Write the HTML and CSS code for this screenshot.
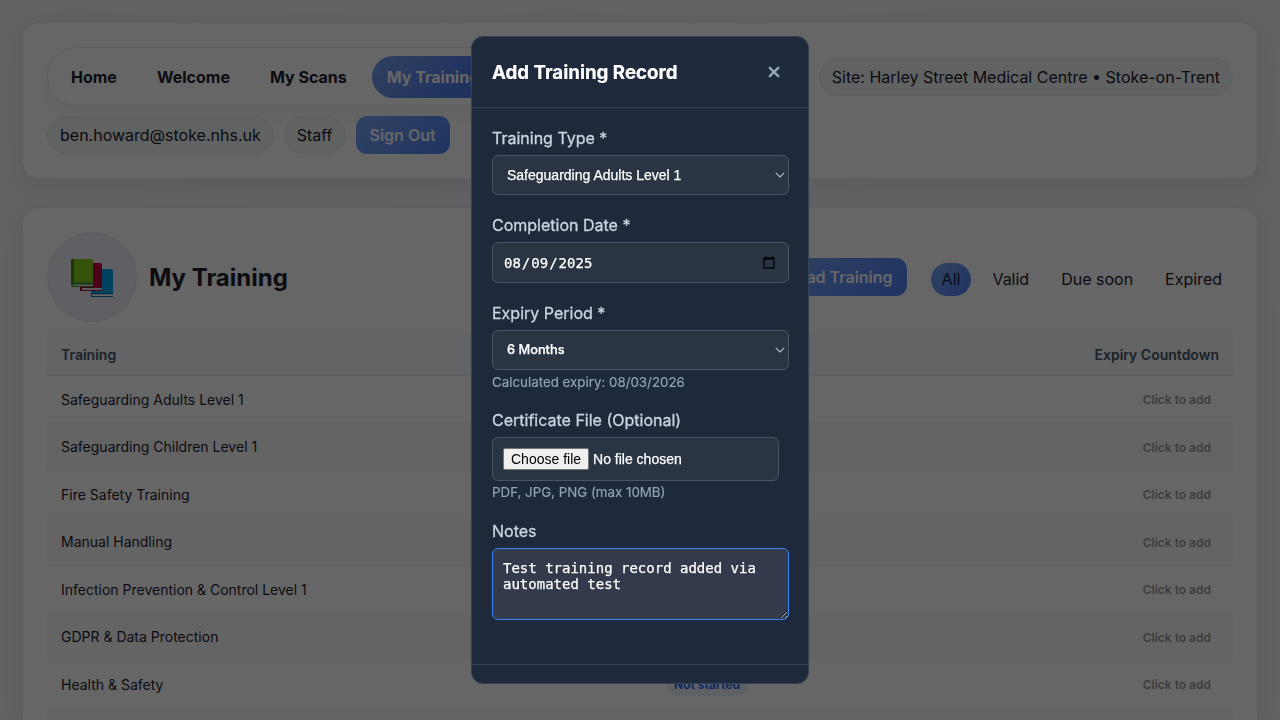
FILE: index.html
```html
<!DOCTYPE html>
<html lang="en-GB">
<head>
<meta charset="utf-8">
<title>My Training</title>
<link rel="stylesheet" href="styles.css">
</head>
<body>
<main class="page">
  <header class="card topbar">
    <nav class="nav">
      <a class="nav-link">Home</a>
      <a class="nav-link">Welcome</a>
      <a class="nav-link">My Scans</a>
      <a class="nav-link active">My Training</a>
    </nav>
    <span class="pill site">Site: Harley Street Medical Centre • Stoke-on-Trent</span>
    <span class="pill">ben.howard@stoke.nhs.uk</span>
    <span class="pill">Staff</span>
    <button class="btn signout">Sign Out</button>
  </header>

  <section class="card content">
    <div class="heading">
      <div class="badge">
        <svg width="44" height="42" viewBox="0 0 44 42">
          <path d="M21 11h20q2 0 2 2v25H21z" fill="#00a4ef"/>
          <path d="M21 35h22v4H21z" fill="#0072b5"/><path d="M22 36.300h21v1.700H22z" fill="#fff"/>
          <path d="M11 5h19q2 0 2 2v25H11z" fill="#c9003f"/>
          <path d="M10 29h22v4H10z" fill="#b00038"/><path d="M12 30h20v2H12z" fill="#e9dce4"/>
          <path d="M1 1h20.500q1.500 0 1.500 2v23H1z" fill="#84d01c"/>
          <path d="M1 1h3v25H1z" fill="#458b12"/>
          <path d="M1 26q0-1.500 2-1.500h20V29H3q-2 0-2-3z" fill="#398b37"/><path d="M3 26.500h20V28H3z" fill="#dce8e4"/>
        </svg>
      </div>
      <h1>My Training</h1>
      <button class="btn upload">Upload Training</button>
      <div class="filters">
        <span class="filter on">All</span>
        <span class="filter">Valid</span>
        <span class="filter">Due soon</span>
        <span class="filter">Expired</span>
      </div>
    </div>
    <table class="table">
      <thead><tr><th>Training</th><th class="mid"></th><th class="end">Expiry Countdown</th></tr></thead>
      <tbody>
        <tr><td>Safeguarding Adults Level 1</td><td class="mid"></td><td class="end"><span class="add">Click to add</span></td></tr>
        <tr><td>Safeguarding Children Level 1</td><td class="mid"></td><td class="end"><span class="add">Click to add</span></td></tr>
        <tr><td>Fire Safety Training</td><td class="mid"></td><td class="end"><span class="add">Click to add</span></td></tr>
        <tr><td>Manual Handling</td><td class="mid"></td><td class="end"><span class="add">Click to add</span></td></tr>
        <tr><td>Infection Prevention &amp; Control Level 1</td><td class="mid"></td><td class="end"><span class="add">Click to add</span></td></tr>
        <tr><td>GDPR &amp; Data Protection</td><td class="mid"></td><td class="end"><span class="add">Click to add</span></td></tr>
        <tr><td>Health &amp; Safety</td><td class="mid"><span class="status">Not started</span></td><td class="end"><span class="add">Click to add</span></td></tr>
        <tr><td></td><td></td><td></td></tr>
      </tbody>
    </table>
  </section>
</main>

<div class="overlay">
  <div class="modal">
    <div class="modal-head">
      <h2>Add Training Record</h2>
      <svg class="close" width="12" height="12" viewBox="0 0 12 12"><path d="M1.800 1.800l8.400 8.400M10.200 1.800L1.800 10.200" stroke="#94a3b8" stroke-width="2.500" stroke-linecap="round"/></svg>
    </div>
    <div class="modal-body">
      <div class="group">
        <label>Training Type *</label>
        <div class="control select"><span>Safeguarding Adults Level 1</span><svg width="10" height="6" viewBox="0 0 10 6"><path d="M.8.8L5 5 9.200.8" fill="none" stroke="#b6bec9" stroke-width="1.100"/></svg></div>
      </div>
      <div class="group">
        <label>Completion Date *</label>
        <div class="control date"><span class="digits"><span>08</span><span>/</span><span>09</span><span>/</span><span>2025</span></span><svg width="12" height="13" viewBox="0 0 12 13"><path d="M1 2.200h10v9.800H1z" fill="none" stroke="#05070a" stroke-width="1.400"/><path d="M.5 1.500h11v2.300H.5zM2.200.2h1.300v2H2.200zM8.500.2h1.300v2H8.500z" fill="#05070a"/></svg></div>
      </div>
      <div class="group">
        <label>Expiry Period *</label>
        <div class="control select"><span class="months">6 Months</span><svg width="10" height="6" viewBox="0 0 10 6"><path d="M.8.8L5 5 9.200.8" fill="none" stroke="#b6bec9" stroke-width="1.100"/></svg></div>
        <p class="hint calc">Calculated expiry: 08/03/2026</p>
      </div>
      <div class="group upload-group">
        <label>Certificate File (Optional)</label>
        <div class="control file"><span class="choose">Choose file</span><span>No file chosen</span></div>
        <p class="hint">PDF, JPG, PNG (max 10MB)</p>
      </div>
      <div class="group">
        <label>Notes</label>
        <textarea class="control notes">Test training record added via automated test</textarea>
      </div>
    </div>
    <div class="modal-foot"></div>
  </div>
</div>
</body>
</html>
```
FILE: styles.css
```css
* { box-sizing: border-box; }
html { height: 720px; overflow: hidden; }
body {
  margin: 0;
  height: 720px;
  overflow: hidden;
  font-family: Inter, sans-serif;
  font-size: 16px;
  line-height: 20px;
  color: #1c2130;
  background: radial-gradient(circle at 25% 0, #f7f3fa 0, transparent 35%), radial-gradient(circle at 85% 0, #eff4fa 0, transparent 30%), #f3f6f8;
}
.page { height: 720px; overflow: hidden; padding: 22px 22px 0; display: flex; flex-direction: column; gap: 28px; }
.card {
  background: #fff;
  border: 1px solid #e9ebee;
  border-radius: 16px;
  padding: 24px;
  box-shadow: 0 8px 28px rgba(15, 23, 42, .08);
}
.topbar { height: 157px; flex: none; display: flex; flex-wrap: wrap; align-items: center; align-content: flex-start; gap: 10px; }
.nav {
  width: 752px;
  height: 59px;
  display: flex;
  align-items: center;
  gap: 10px;
  padding: 0 8px;
  border: 1px solid #eaeced;
  border-radius: 30px;
  box-shadow: 0 8px 20px rgba(15, 23, 42, .05);
}
.nav-link { padding: 11px 15px; border-radius: 21px; font-weight: 700; line-height: 20px; white-space: nowrap; }
.btn, .filter.on { background: linear-gradient(135deg, #78a9f4, #4f80f5); }
.nav-link.active { color: #fff; background: linear-gradient(135deg, #78a2ee, #4f7fec 70%); }
.pill {
  height: 38px;
  padding: 8px 12px;
  border: 1px solid #e9eeec;
  border-radius: 19px;
  background: #f2f6f5;
  white-space: nowrap;
}
.site { margin-left: auto; }
.btn { border: 0; height: 38px; border-radius: 11px; padding: 0 14px; color: #fff; font: 600 16px/20px Inter, sans-serif; white-space: nowrap; }
.content { height: 513px; flex: none; overflow: hidden; border-bottom: 0; padding-bottom: 0; border-radius: 16px 16px 0 0; }
.heading { display: flex; align-items: center; height: 90px; }
.badge {
  width: 90px;
  height: 90px;
  border-radius: 50%;
  display: flex;
  align-items: center;
  justify-content: center;
  background: #eff0fb;
  border: 1px solid #e3e6ee;
}
.badge svg { margin-top: 3px; }
h1 { margin: 2px auto 0 12px; font-size: 24px; line-height: 32px; font-weight: 700; }
.filters { display: flex; gap: 10px; margin: 4px 0 0 24px; }
.filter { padding: 7px 11px; height: 33px; border-radius: 17px; line-height: 19px; }
.table { width: 100%; margin-top: 12px; border-collapse: separate; border-spacing: 0; table-layout: fixed; font-size: 14px; }
th { height: 42px; padding: 0 14px; text-align: left; font-weight: 600; color: #475569; background: #f8fafc; border-bottom: 1px solid #e2e8f0; }
td { height: 47.5px; padding: 1px 14px 0; border-bottom: 1px solid #f1f2f4; }
tbody tr:nth-child(even) td { background: #fbfbfb; }
.mid { width: 240px; padding-left: 146px; white-space: nowrap; }
.end { text-align: right; }
.add { font-size: 12px; font-weight: 600; color: #999; padding-right: 8px; }
.status { padding: 4px 8px; border-radius: 12px; background: #edf0fb; color: #2563eb; font-size: 12px; font-weight: 700; }
.overlay { position: fixed; inset: 0; background: rgba(0, 0, 0, .6); display: flex; justify-content: center; align-items: center; }
.modal {
  width: 338px;
  height: 648px;
  overflow: hidden;
  background: #1e293b;
  border: 1px solid #334155;
  border-radius: 12px;
}
.modal-head { height: 71px; padding: 0 28px 0 20px; display: flex; align-items: center; justify-content: space-between; border-bottom: 1px solid #334155; }
h2 { margin: 2px 0 0; font-size: 18.720px; font-weight: 700; line-height: 24px; color: #fff; -webkit-text-stroke: .2px; }
.modal-body { height: 556px; padding: 20px 19px 0 20px; }
.group { margin-bottom: 20px; }
label { display: block; height: 20px; margin-bottom: 7px; color: #cbd5e1; font-weight: 400; -webkit-text-stroke: .3px; }
.control {
  width: 297px;
  height: 40px;
  display: flex;
  align-items: center;
  border: 1px solid #4b5563;
  border-radius: 6px;
  background: #2a3544;
  color: #fff;
  font: 14px/16px "Liberation Sans", Arial, sans-serif;
  -webkit-text-stroke: .25px;
}
.select { justify-content: space-between; padding: 0 3px 0 14px; }
.months { font: 500 12.800px/16px Inter, sans-serif; }
.date { height: 41px; justify-content: space-between; padding: 0 13px 0 11px; font-family: "DejaVu Sans Mono", monospace; }
.digits { display: flex; gap: 1px; }
.hint { margin: 3px 0 0; font-size: 13.333px; line-height: 17px; color: #94a3b8; -webkit-text-stroke: .15px; }
.calc { margin: 4px 0 0; line-height: 16px; }
.file { width: 287px; height: 44px; padding: 0 10px; gap: 4px; }
.choose { height: 22px; padding: 2px 7px; color: #000; background: #efefef; border: 1px solid #767676; border-radius: 2px; -webkit-text-stroke: 0; }
.notes { display: block; height: 72px; padding: 11px 10px; margin: 0; outline: 0; resize: vertical; border-color: #3b82f6; background: #323a4b; font-family: "DejaVu Sans Mono", monospace; }
.modal-foot { height: 24px; border-top: 1px solid #334155; }
```
